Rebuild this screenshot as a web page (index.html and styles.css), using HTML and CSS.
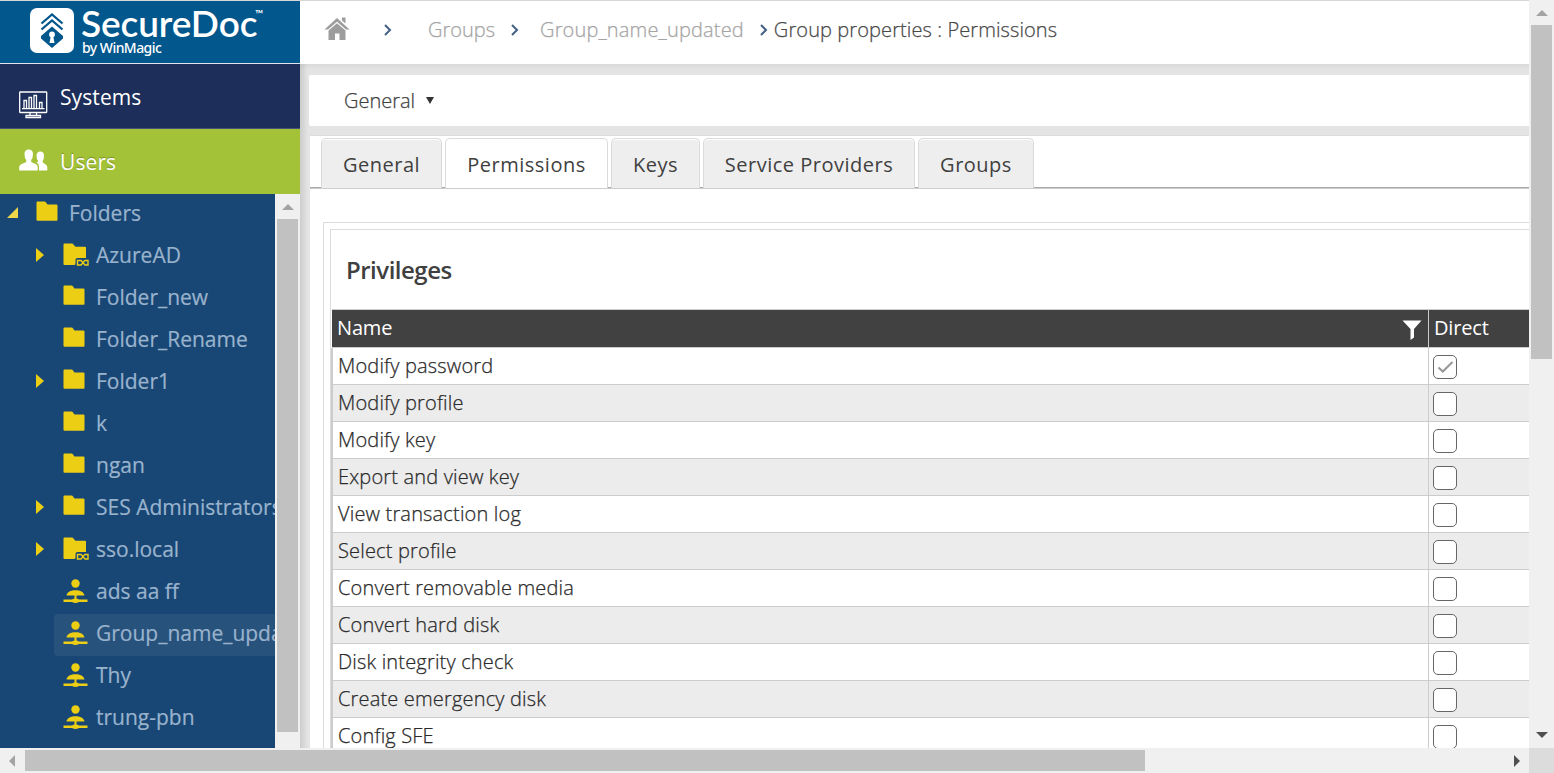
FILE: index.html
```
<!DOCTYPE html>
<html lang="en">
<head>
<meta charset="utf-8">
<title>SecureDoc</title>
<link rel="stylesheet" href="styles.css">
</head>
<body>
<svg width="0" height="0" class="defs">
  <symbol id="folder" viewBox="0 0 27 24"><path d="M.5 1.5Q.5.5 1.5.5H8.500Q9.500.5 10 1.500L11.500 3.500H20.500Q21.500 3.500 21.500 4.500V19Q21.500 19.700 20.700 19.700H1.500Q.5 19.700.5 18.700Z" fill="#ecce14"/></symbol>
  <symbol id="linked" viewBox="0 0 27 24"><path d="M.5 1.500Q.5.5 1.500.5H9.500L12.500 3.800H22Q23 3.800 23 4.800V15H14.500Q12.500 15 12.500 17V20.500Q12.500 22 11 22H1.500Q.5 22 .5 21Z" fill="#ecce14"/><path d="M14.500 17.500H18L20 19.500L22 17.500H25V22H22L20 19.700L18 22H14.500Z" fill="none" stroke="#ecce14" stroke-width="1.400"/></symbol>
  <symbol id="group" viewBox="0 0 27 24"><circle cx="12.500" cy="4.500" r="4.200" fill="#ecce14"/><path d="M3.500 16.500C4 13 8 11.300 12.500 11.300S21 13 21.500 16.500H13.500V19.500Q15.500 19.800 16 20.500H24.500V23H16Q12.500 25 9 23H.5V20.500H9Q9.500 19.800 11.500 19.500V16.500Z" fill="#ecce14"/></symbol>
</svg>
<div class="window">
  <div class="page">
    <aside class="side">
      <div class="logo">
        <svg class="mark" width="44" height="45" viewBox="0 0 44 45"><rect width="44" height="45" rx="7" fill="#fff"/><g fill="none" stroke="#02578d" stroke-width="2.300"><path d="M11.500 15.500L22 6.500L32.500 15.500"/><path d="M11.500 21.500L22 12.500L32.500 21.500"/></g><path d="M11 28L22 18.500L33 28V30.500L22 40L11 30.500Z" fill="#02578d"/><circle cx="22" cy="26.500" r="2.900" fill="#fff"/><path d="M20.800 28H23.200L24.500 35H19.500Z" fill="#fff"/></svg>
        <div class="brand"><div class="brand-name">SecureDoc<span class="tm">™</span></div><div class="brand-by">by WinMagic</div></div>
      </div>
      <div class="nav systems">
        <svg width="30" height="28" viewBox="0 0 30 28" fill="none" stroke="#fff" stroke-width="1.300"><rect x=".7" y="1" width="27" height="20.500" rx=".5"/><path d="M3 17.700H25.500M5 17V9.500H7.500V17M10 17V6.500H12.500V17M15 17V4.500H17.500V17M20.500 17V11.500H23V17M11 21.500V24M17.500 21.500V24M7 26.500V24.500H21.500V26.500Z"/></svg>
        <span>Systems</span>
      </div>
      <div class="nav users">
        <svg width="30" height="22" viewBox="0 0 30 22" fill="#fff"><path d="M.2 21.500V18Q.5 15.500 4 14.500Q7 13.500 7.200 12.700V11Q5.500 9 5.500 5Q5.500.5 9.700.5T14 5Q14 9 12.200 11V12.700Q12.500 13.500 15 14.300Q18.500 15.500 18.700 18V21.500Z"/><path d="M20 21.500V17.500Q20 14.500 17.500 13.500Q19 13 19.200 12.200Q17.500 10.500 17.500 7Q17.500 2.500 21.300 2.500T25 7Q25 10.500 23.700 12V13Q24 14 26 15Q28.300 16 28.300 18.500V21.500Z"/></svg>
        <span>Users</span>
      </div>
      <div class="tree-wrap">
        <div class="tree">
          <div class="node root"><i class="open"></i><svg><use href="#folder"/></svg><span>Folders</span></div>
          <div class="node"><i class="closed"></i><svg><use href="#linked"/></svg><span>AzureAD</span></div>
          <div class="node"><i></i><svg><use href="#folder"/></svg><span>Folder_new</span></div>
          <div class="node"><i></i><svg><use href="#folder"/></svg><span>Folder_Rename</span></div>
          <div class="node"><i class="closed"></i><svg><use href="#folder"/></svg><span>Folder1</span></div>
          <div class="node"><i></i><svg><use href="#folder"/></svg><span>k</span></div>
          <div class="node"><i></i><svg><use href="#folder"/></svg><span>ngan</span></div>
          <div class="node"><i class="closed"></i><svg><use href="#folder"/></svg><span>SES Administrators</span></div>
          <div class="node"><i class="closed"></i><svg><use href="#linked"/></svg><span>sso.local</span></div>
          <div class="node"><i></i><svg><use href="#group"/></svg><span>ads aa ff</span></div>
          <div class="node selected"><svg><use href="#group"/></svg><span>Group_name_updated</span></div>
          <div class="node"><i></i><svg><use href="#group"/></svg><span>Thy</span></div>
          <div class="node"><i></i><svg><use href="#group"/></svg><span>trung-pbn</span></div>
        </div>
        <div class="vbar"><b class="up"></b><div class="thumb side-thumb"></div></div>
      </div>
    </aside>
    <main class="main">
      <nav class="crumbs">
        <svg class="home" width="26" height="25" viewBox="0 0 26 25" fill="#9d9d9d"><path d="M.5 12.500L13 1L25.500 12.500H22L13 4.800L4 12.500Z"/><path d="M4.500 13.500L13 6.200L21.500 13.500V23H15.500V16.500H11V23H4.500ZM18 .5H21.500V6.500L18 3.500Z"/></svg>
        <svg class="chev c1" viewBox="0 0 8 12"><path d="M1 1L6 6L1 11"/></svg>
        <a class="short">Groups</a>
        <svg class="chev c2" viewBox="0 0 8 12"><path d="M1 1L6 6L1 11"/></svg>
        <a>Group_name_updated</a>
        <svg class="chev c3" viewBox="0 0 8 12"><path d="M1 1L6 6L1 11"/></svg>
        <span>Group properties : Permissions</span>
      </nav>
      <div class="body">
        <div class="toolbar"><span>General</span><b></b></div>
        <section class="panel">
          <div class="tabs">
            <div class="tab t1">General</div><div class="tab t2 on">Permissions</div><div class="tab t3">Keys</div><div class="tab t4">Service Providers</div><div class="tab t5">Groups</div>
          </div>
          <div class="frame"><div class="inner">
            <h2>Privileges</h2>
            <div class="row head"><div class="name">Name<svg width="20" height="21" viewBox="0 0 20 21"><path d="M.5.500H19.500L12 9V17.500L8.500 20V9Z" fill="#fff"/></svg></div><div class="direct">Direct</div></div>
            <div class="rows">
              <div class="row"><div class="name">Modify password</div><div class="direct"><span class="box"><svg viewBox="0 0 22 22"><path d="M4.500 11.500L8.800 15.500L18.500 6" fill="none" stroke="#999" stroke-width="2.200"/></svg></span></div></div>
              <div class="row"><div class="name">Modify profile</div><div class="direct"><span class="box"></span></div></div>
              <div class="row"><div class="name">Modify key</div><div class="direct"><span class="box"></span></div></div>
              <div class="row"><div class="name">Export and view key</div><div class="direct"><span class="box"></span></div></div>
              <div class="row"><div class="name">View transaction log</div><div class="direct"><span class="box"></span></div></div>
              <div class="row"><div class="name">Select profile</div><div class="direct"><span class="box"></span></div></div>
              <div class="row"><div class="name">Convert removable media</div><div class="direct"><span class="box"></span></div></div>
              <div class="row"><div class="name">Convert hard disk</div><div class="direct"><span class="box"></span></div></div>
              <div class="row"><div class="name">Disk integrity check</div><div class="direct"><span class="box"></span></div></div>
              <div class="row"><div class="name">Create emergency disk</div><div class="direct"><span class="box"></span></div></div>
              <div class="row"><div class="name">Config SFE</div><div class="direct"><span class="box"></span></div></div>
            </div>
          </div></div>
        </section>
      </div>
    </main>
  </div>
  <div class="vbar"><b class="up"></b><div class="thumb page-thumb"></div><b class="down"></b></div>
  <div class="hbar"><b class="left"></b><div class="thumb"></div><b class="right"></b></div>
  <div class="corner"></div>
</div>
</body>
</html>
```
FILE: styles.css
```
* { box-sizing: border-box; }
body { margin: 0; overflow: hidden; font-family: "Open Sans", "Noto Sans", sans-serif; font-size: 20px; color: #404040; }
svg { flex: none; display: block; }
.defs { display: none; }
.window { display: grid; grid-template: 748px 25px / 1529px 25px; width: 1554px; height: 773px; background: #fff; white-space: nowrap; }
.page { display: flex; overflow: hidden; border-top: 1px solid #d6d6d6; }

.side { width: 300px; flex: none; display: flex; flex-direction: column; }
.logo { height: 63px; flex: none; background: #02578d; border-bottom: 1px solid #e0e4ec; display: flex; padding: 7px 0 0 30px; color: #fff; }
.brand { margin-left: 7px; }
.brand-name { font: 600 37px/34px Lato, sans-serif; letter-spacing: -.1px; height: 34px; margin-top: -2px; display: flex; }
.tm { font-size: 11px; line-height: 16px; margin-left: -2px; }
.brand-by { font: 500 14px/15px "Noto Sans", sans-serif; letter-spacing: -.55px; padding-left: 1px; }
.nav { flex: none; display: flex; font-size: 21px; line-height: 26px; color: #fff; padding-left: 19px; letter-spacing: .1px; }
.nav span { margin-left: 11px; }
.systems { height: 65px; background: #1c2e59; border-bottom: 1px solid #46547a; padding-top: 20px; }
.systems svg { margin-top: 7px; }
.users { height: 65px; background: #a3c237; padding-top: 20px; text-shadow: 0 -1px 1px rgba(0,0,0,.25); }
.tree-wrap { flex: 1; display: flex; min-height: 0; }
.tree { width: 275px; background: #184775; color: #9ab3cd; overflow: hidden; font-size: 21px; -webkit-text-stroke: .2px; }
.node { height: 42px; display: flex; align-items: center; padding-left: 35px; line-height: 28px; }
.node i { width: 28px; flex: none; height: 16px; display: flex; margin-bottom: 2px; align-items: flex-start; }
.node svg { width: 27px; height: 24px; margin: 0 6px 5px 0; }
.node span { padding-bottom: 5px; }
.closed::before { content: ""; border-left: 8px solid #ecce14; border-top: 7px solid transparent; border-bottom: 7px solid transparent; margin-left: 1px; }
.root { padding-left: 7px; }
.node.root i { width: 29px; align-items: center; margin-bottom: 5px; }
.open::before { content: ""; width: 11px; height: 11px; background: #f0d84a; clip-path: polygon(100% 0, 100% 100%, 0 100%); }
.selected { margin-left: 54px; padding-left: 9px; background: #27527c; border-radius: 4px 0 0 4px; }

.vbar, .hbar { background: #f0f0f0; display: flex; align-items: center; }
.vbar { width: 25px; flex-direction: column; }
.thumb { background: #c1c1c1; width: 21px; flex: none; }
.side-thumb { height: 513px; }
.page-thumb { height: 334px; margin-bottom: auto; }
.up { height: 25px; flex: none; padding-top: 10px; }
.up::before { content: ""; display: block; border: 6px solid transparent; border-top: 0; border-bottom-color: #a3a3a3; }
.down { height: 16px; }
.down::before { content: ""; display: block; border: 6px solid transparent; border-bottom: 0; border-top-color: #505050; }
.hbar .thumb { width: 1120px; height: 21px; margin-right: auto; }
.left { width: 25px; padding-left: 9px; }
.left::before { content: ""; display: block; width: 0; border: 6px solid transparent; border-left: 0; border-right-color: #a3a3a3; }
.right { width: 15px; }
.right::before { content: ""; display: block; width: 0; border: 6px solid transparent; border-right: 0; border-left-color: #505050; }
.corner { background: #dcdcdc; }

.main { flex: 1; min-width: 0; display: flex; flex-direction: column; }
.crumbs { height: 63px; flex: none; display: flex; align-items: center; padding: 0 0 6px 24px; font-weight: 300; color: #484848; letter-spacing: .1px; -webkit-text-stroke: .25px; }
.crumbs a { color: #a4a4a4; letter-spacing: .16px; }
.crumbs .short { letter-spacing: 0; }
.chev { width: 8px; height: 12px; fill: none; stroke: #446083; stroke-width: 2; }
.c1 { margin: 0 36px 0 34px; }
.c2 { margin: 0 21px 0 16px; }
.c3 { margin: 0 6px 0 16px; }
.body { flex: 1; background: linear-gradient(90deg, rgba(0,0,0,.1), transparent 8px), linear-gradient(#dadada, #e4e4e4 6px); padding: 11px 0 0 9px; }
.toolbar { height: 51px; background: #fff; border-radius: 2px 0 0 2px; padding-left: 35px; display: flex; align-items: center; font-weight: 300; -webkit-text-stroke: .25px; }
.toolbar b { border: 4px solid transparent; border-top: 7px solid #333; border-bottom: 0; margin-left: 11px; }
.panel { margin: 9px 0 0 1px; background: #fff; border-top: 1px solid #dcdcdc; height: 622px; }
.tabs { height: 53px; display: flex; align-items: flex-end; gap: 3px; padding-left: 11px; background: linear-gradient(#aaa, #aaa) 0 51px / 100% 1px no-repeat, linear-gradient(#ccc, #ccc) 0 52px / 100% 1px no-repeat; }
.tab { height: 51px; line-height: 51px; background: #eee; border: 1px solid #dadada; border-bottom-color: #ccc; border-radius: 5px 5px 0 0; text-align: center; letter-spacing: .5px; box-shadow: inset 0 1px #fff; }
.tab.on { background: #fff; }
.t1 { width: 121px; } .t2 { width: 163px; } .t3 { width: 89px; } .t4 { width: 212px; } .t5 { width: 116px; }
.frame { margin: 33px 0 0 13px; border: 1px solid #dcdcdc; border-width: 1px 0 0 1px; padding: 6px 0 0 6px; height: 600px; }
.inner { border: 1px solid #dcdcdc; border-width: 1px 0 0 1px; height: 600px; }
h2 { margin: 0; height: 79px; padding-left: 15px; font-size: 24px; font-weight: 600; line-height: 80px; letter-spacing: -.5px; }
.row { height: 37px; display: flex; border-bottom: 1px solid #ccc; line-height: 36px; font-weight: 300; color: #2a2a2a; letter-spacing: .17px; -webkit-text-stroke: .25px; }
.row:nth-child(even) { background: #ececec; }
.row .name { width: 1095px; padding-left: 5px; display: flex; justify-content: space-between; }
.direct { flex: 1; border-left: 1px solid #ccc; padding: 7px 0 0 4px; }
.row.head { height: 39px; border-top: 1px solid #ccc; margin-left: 1px; background: #414141; color: #fff; font-weight: 400; letter-spacing: -.15px; -webkit-text-stroke: 0; }
.head .name { width: 1096px; padding-right: 6px; }
.head svg { margin-top: 10px; }
.head .direct { padding: 0 0 0 5px; }
.rows { border-left: 2px solid #ccc; }
.box { display: block; width: 24px; height: 24px; border: 1px solid #666; border-radius: 5px; background: #fff; }
```
